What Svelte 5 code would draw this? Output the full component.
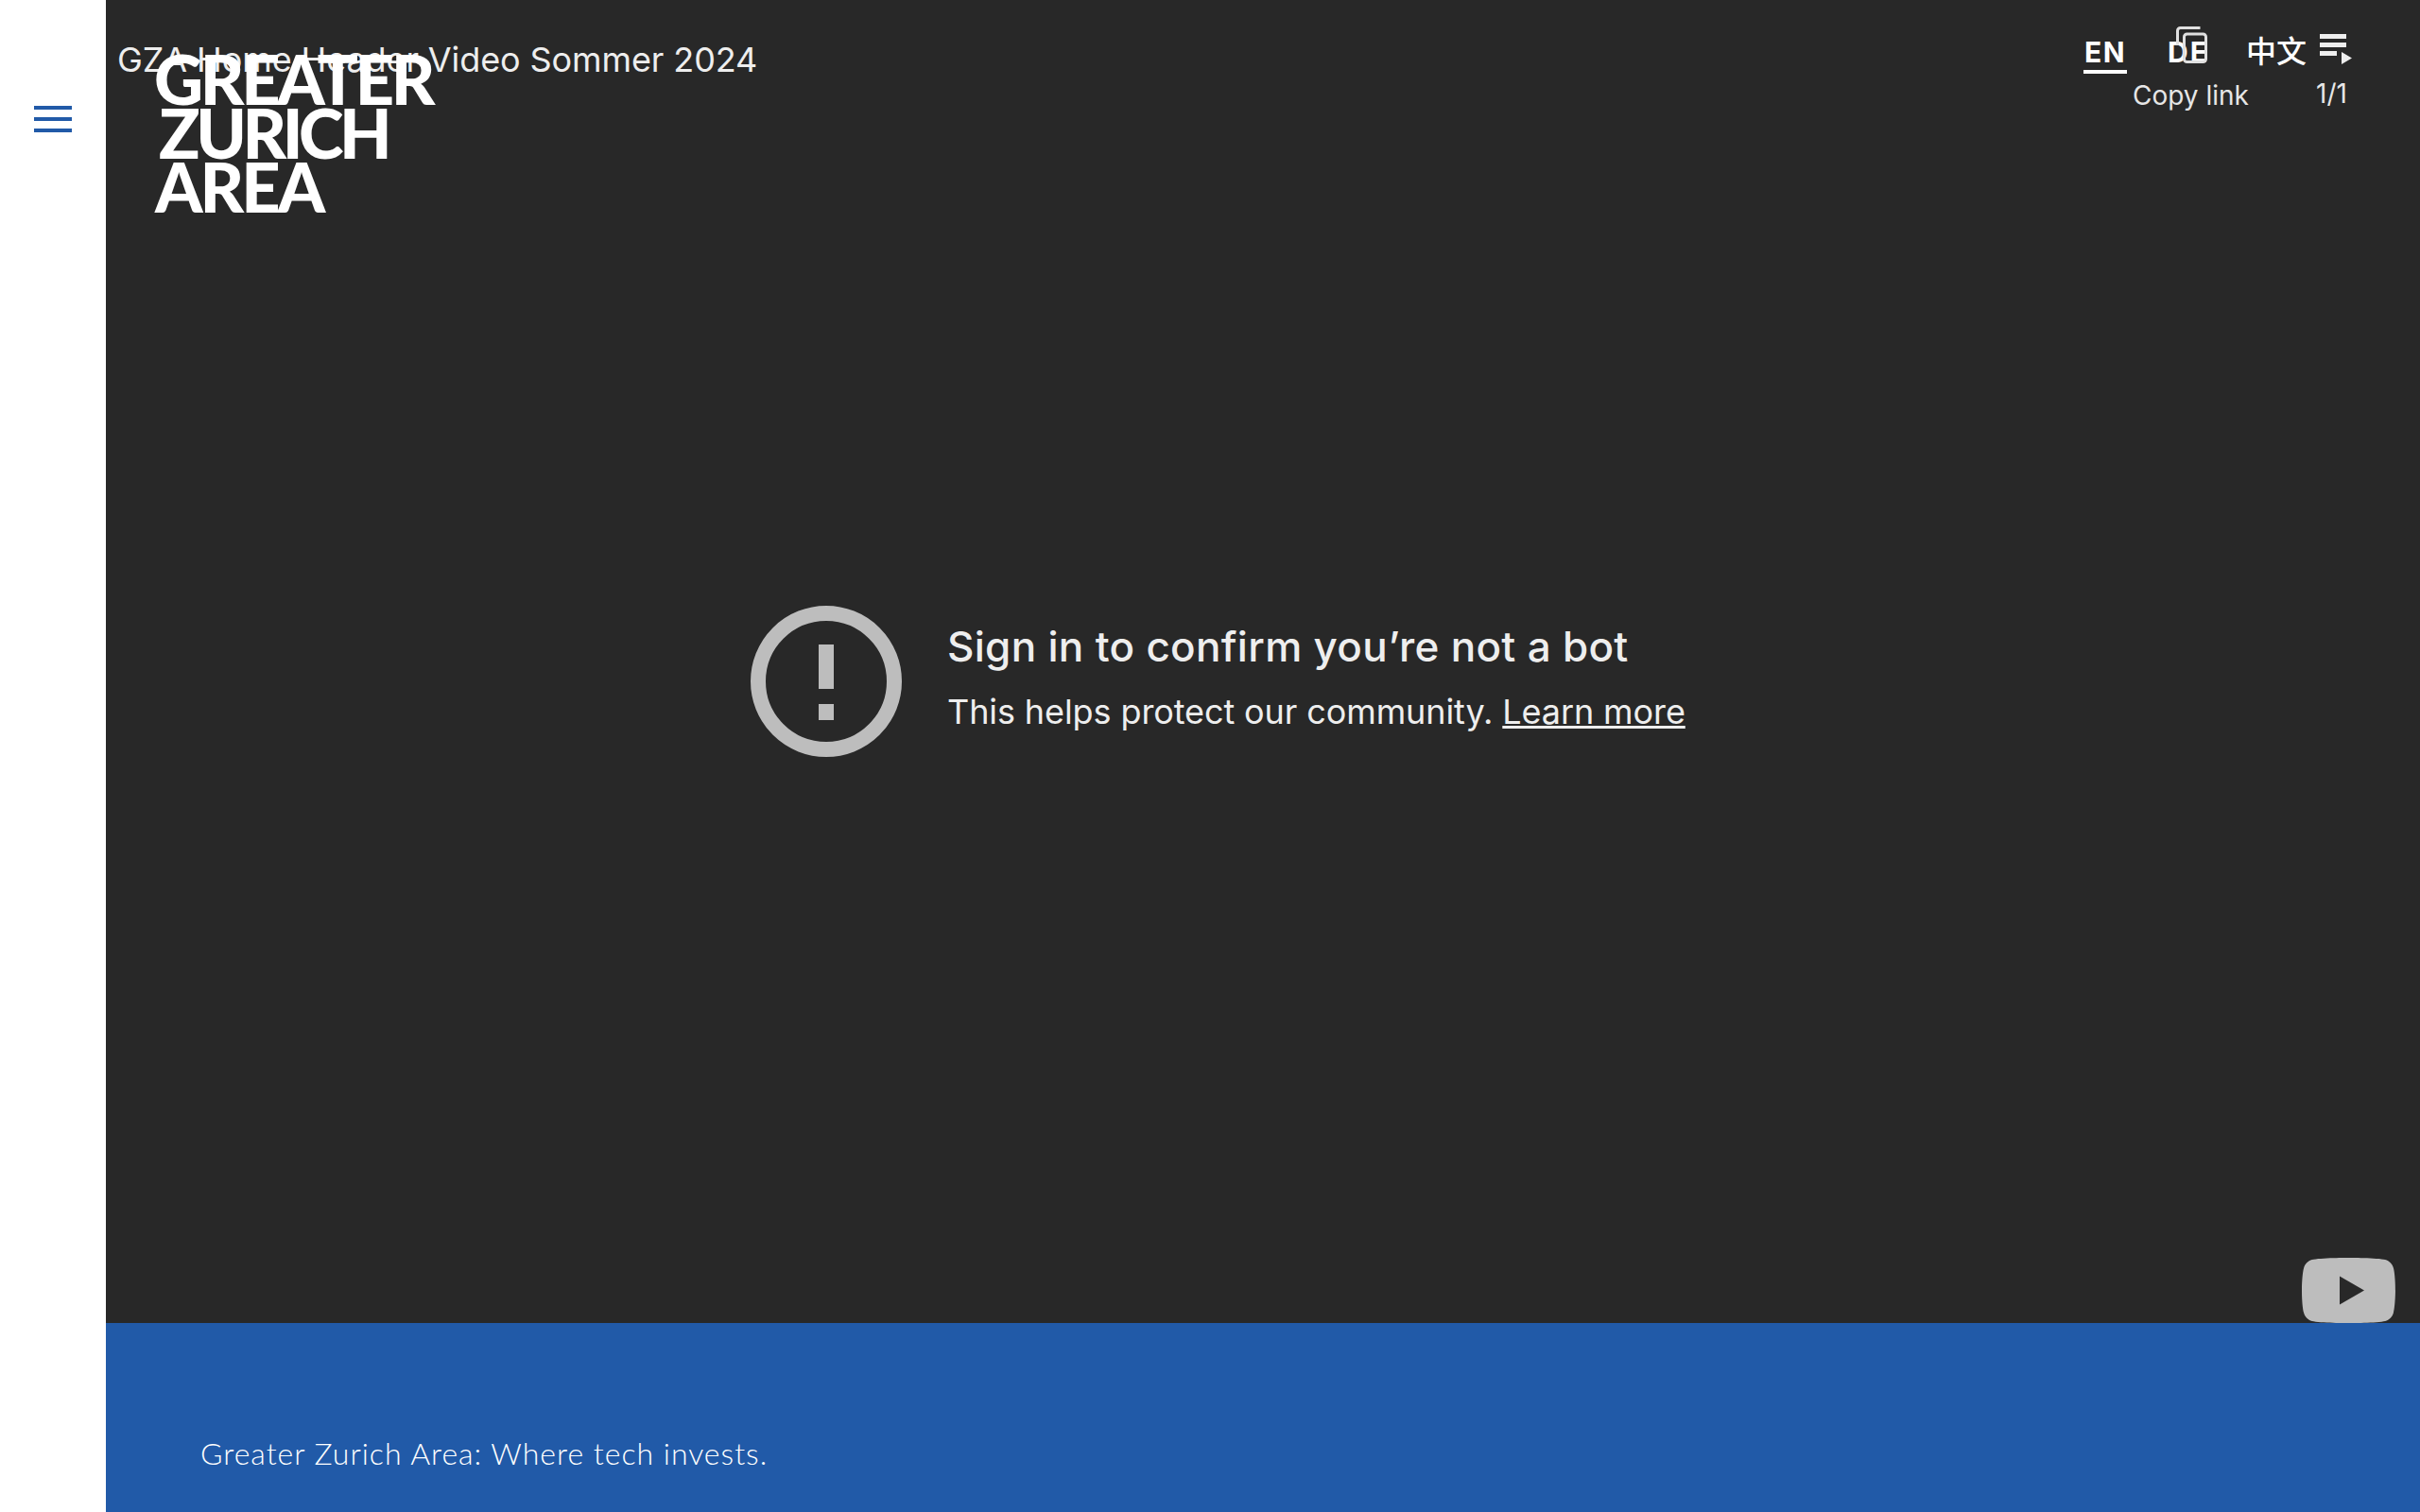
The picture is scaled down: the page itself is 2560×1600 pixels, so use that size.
<script lang="ts">
	const title = 'GZA Home Header Video Sommer 2024';
</script>

<div class="page">
	<aside class="side">
		<button class="burger" aria-label="Menu">
			<span></span>
			<span></span>
			<span></span>
		</button>
	</aside>

	<main class="main">
		<section class="video">
			<div class="title">{title}</div>

			<div class="logo">
				<div class="l1">GREATER</div>
				<div class="l2">ZURICH</div>
				<div class="l3">AREA</div>
			</div>

			<nav class="lang">
				<span class="en">EN</span>
				<span class="de">DE</span>
				<span class="zh">中文</span>
			</nav>

			<div class="copy">
				<svg class="copy-icon" viewBox="0 0 33 39" fill="none" stroke="#e0e0e0" stroke-width="3">
					<path d="M1.500 20V4.500a3 3 0 0 1 3-3h21" />
					<rect x="8.500" y="8" width="23" height="29.500" rx="3" />
				</svg>
				<span>Copy link</span>
			</div>

			<div class="playlist">
				<svg viewBox="0 0 34 32" fill="#eeeeee">
					<rect x="0" y="0" width="28" height="5" />
					<rect x="0" y="9" width="28" height="5" />
					<rect x="0" y="18" width="18" height="5" />
					<path d="M23 19l11 6.500-11 6.500z" />
				</svg>
				<span>1/1</span>
			</div>

			<div class="error">
				<svg class="warn" viewBox="0 0 160 160">
					<circle cx="80" cy="80" r="72" fill="none" stroke="#bdbdbd" stroke-width="16" />
					<rect x="72" y="41" width="16" height="47" fill="#bdbdbd" />
					<rect x="72" y="104" width="16" height="17" fill="#bdbdbd" />
				</svg>
				<div class="msg">
					<div class="head">Sign in to confirm you’re not a bot</div>
					<div class="sub">This helps protect our community. <u>Learn more</u></div>
				</div>
			</div>

			<svg class="yt" viewBox="0 0 99 69">
				<path
					fill="#bdbdbd"
					d="M96.900 10.800c-1.100-4.200-4.400-7.600-8.700-8.700C80.400 0 49.500 0 49.500 0S18.600 0 10.800 2.100C6.500 3.200 3.200 6.600 2.100 10.800 0 18.500 0 34.500 0 34.500s0 16 2.100 23.700c1.100 4.200 4.400 7.600 8.700 8.700C18.600 69 49.500 69 49.500 69s30.900 0 38.700-2.100c4.300-1.100 7.600-4.500 8.700-8.700 2.100-7.700 2.100-23.700 2.100-23.700s0-16-2.100-23.700z"
				/>
				<path fill="#282828" d="M40 19.500v30l26-15z" />
			</svg>
		</section>

		<footer class="foot">Greater Zurich Area: Where tech invests.</footer>
	</main>
</div>

<style>
	:global(body) {
		margin: 0;
		background: #fff;
	}

	.page {
		display: grid;
		grid-template-columns: 112px 1fr;
		height: 1600px;
		overflow: hidden;
	}

	.side {
		background: #fff;
		padding: 112px 36px 0;
	}

	.burger {
		display: flex;
		flex-direction: column;
		gap: 8px;
		width: 40px;
		padding: 0;
		border: 0;
		background: none;
	}

	.burger span {
		display: block;
		height: 4px;
		background: #215aa8;
	}

	.main {
		display: flex;
		flex-direction: column;
	}

	.video {
		position: relative;
		height: 1400px;
		box-sizing: border-box;
		padding: 641px 0 0 682px;
		background: #282828;
	}

	.title {
		position: absolute;
		left: 12px;
		top: 41px;
		font: 400 36px/44px Inter, sans-serif;
		letter-spacing: -0.1px;
		color: #eeeeee;
		white-space: nowrap;
	}

	.logo {
		position: absolute;
		left: 51px;
		top: 55px;
		font: 900 72px/57px Lato, sans-serif;
		letter-spacing: -3.300px;
		color: #fff;
	}

	.l2 {
		margin-left: 5px;
		letter-spacing: -4.500px;
	}

	.l3 {
		margin-left: 1px;
		letter-spacing: -3px;
	}

	.lang {
		position: absolute;
		top: 36px;
		left: 2092px;
		display: flex;
		font: 700 30px/38px Inter, sans-serif;
		color: #fff;
	}

	.en {
		width: 46px;
		border-bottom: 4px solid #fff;
		text-align: center;
		letter-spacing: 1.500px;
	}

	.de {
		margin-left: 43px;
		letter-spacing: 2px;
	}

	.zh {
		margin: -3px 0 0 39px;
		font-family: 'Noto Sans CJK SC', sans-serif;
		font-size: 32px;
		font-weight: 500;
	}

	.copy {
		position: absolute;
		top: 28px;
		left: 2144px;
		display: flex;
		flex-direction: column;
		align-items: flex-end;
		font: 400 28px/30px Inter, sans-serif;
		color: #e6e6e6;
	}

	.copy-icon {
		width: 33px;
		height: 39px;
		margin: 0 44px 19px 0;
	}

	.copy span {
		white-space: nowrap;
	}

	.playlist {
		position: absolute;
		top: 36px;
		left: 2342px;
		display: flex;
		flex-direction: column;
		gap: 16px;
		font: 400 28px/30px Inter, sans-serif;
		color: #e6e6e6;
	}

	.playlist svg {
		width: 34px;
		height: 32px;
	}

	.playlist span {
		margin-left: -4px;
	}

	.error {
		display: flex;
		gap: 48px;
	}

	.warn {
		width: 160px;
		height: 160px;
		flex: none;
	}

	.msg {
		padding-top: 16px;
		color: #eeeeee;
		font-family: Inter, sans-serif;
	}

	.head {
		font-size: 44px;
		font-weight: 500;
		line-height: 54px;
		letter-spacing: 0.3px;
	}

	.sub {
		margin-top: 20px;
		font-size: 36px;
		line-height: 44px;
		letter-spacing: -0.1px;
	}

	.yt {
		position: absolute;
		right: 26px;
		bottom: 0;
		width: 99px;
		height: 69px;
	}

	.foot {
		height: 200px;
		box-sizing: border-box;
		padding: 116px 0 0 100px;
		background: #215aa8;
		color: #fff;
		font: 300 32px/44px Lato, sans-serif;
		letter-spacing: 1px;
	}
</style>
